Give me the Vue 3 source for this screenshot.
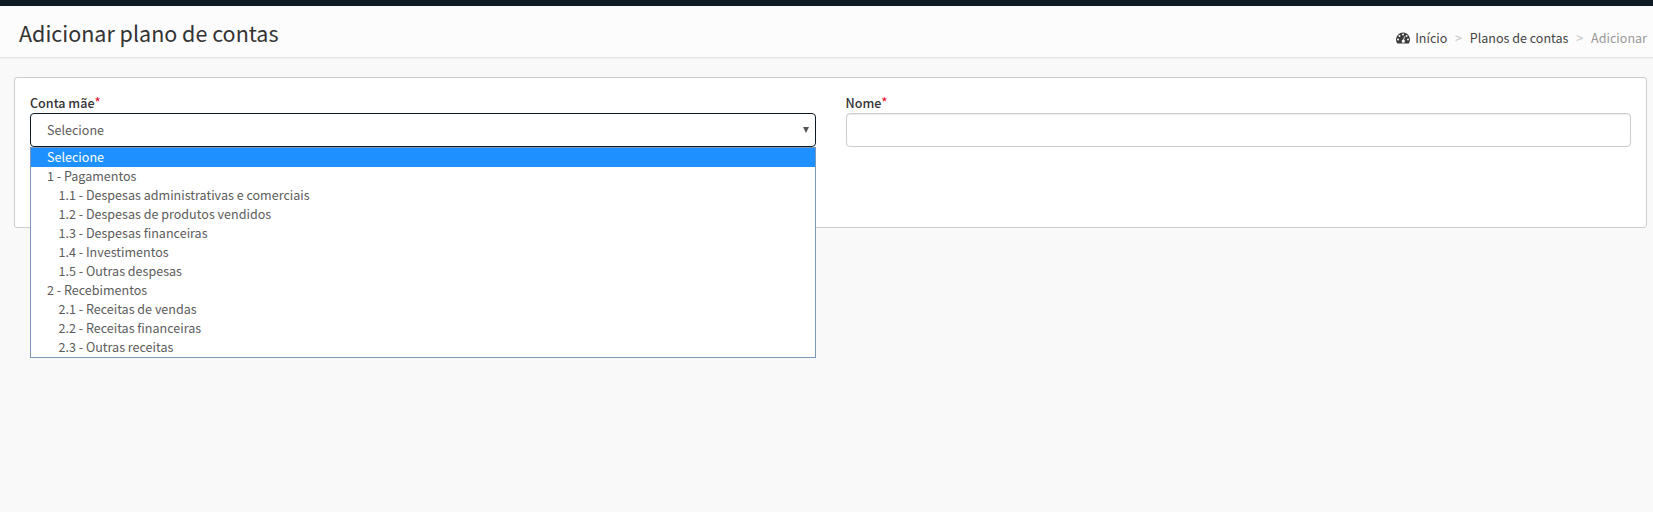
<script setup>
const options = [
  { text: 'Selecione', selected: true },
  { text: '1 - Pagamentos' },
  { text: '1.1 - Despesas administrativas e comerciais', child: true },
  { text: '1.2 - Despesas de produtos vendidos', child: true },
  { text: '1.3 - Despesas financeiras', child: true },
  { text: '1.4 - Investimentos', child: true },
  { text: '1.5 - Outras despesas', child: true },
  { text: '2 - Recebimentos' },
  { text: '2.1 - Receitas de vendas', child: true },
  { text: '2.2 - Receitas financeiras', child: true },
  { text: '2.3 - Outras receitas', child: true },
]
</script>

<template>
  <div class="page">
    <header class="header">
      <h1>Adicionar plano de contas</h1>
      <nav class="crumbs">
        <svg class="gauge" viewBox="0 0 14 12" width="14" height="12">
          <path d="M7 .6a7 7 0 0 0-7 7c0 1.3.4 2.6 1.1 3.7.1.2.3.3.5.3h10.8c.2 0 .4-.1.5-.3A7 7 0 0 0 7 .6z" fill="#3c3c3c" />
          <g fill="#fbfbfb">
            <circle cx="2" cy="7.6" r="1" />
            <circle cx="3.5" cy="4.1" r="1" />
            <circle cx="7" cy="2.6" r="1" />
            <circle cx="10.5" cy="4.1" r="1" />
            <circle cx="12" cy="7.6" r="1" />
            <path d="M8.1 4.5l.8.2-.8 3.1a1.6 1.6 0 1 1-.8-.2z" />
          </g>
        </svg>
        <a class="home">Início</a>
        <span class="sep">&gt;</span>
        <a class="plans">Planos de contas</a>
        <span class="sep">&gt;</span>
        <span class="current">Adicionar</span>
      </nav>
    </header>

    <main class="card">
      <div class="field">
        <label>Conta mãe<b>*</b></label>
        <div class="control select">
          <span>Selecione</span>
          <svg class="arrow" viewBox="0 0 6 6" width="6" height="6"><path d="M0 0h6L3 6z" fill="#555" /></svg>
        </div>
        <ul class="menu">
          <li v-for="o in options" :key="o.text" :class="{ selected: o.selected, child: o.child }">{{ o.text }}</li>
        </ul>
      </div>
      <div class="field">
        <label>Nome<b>*</b></label>
        <div class="control input"></div>
      </div>
    </main>
  </div>
</template>

<style>
body { background: #f9f9f9; }
</style>

<style scoped>
* { box-sizing: border-box; }
.page {
  height: 512px;
  overflow: hidden;
  background: #f9f9f9;
  border-top: 6px solid #0e1a25;
  font-family: "Noto Sans CJK SC", "Noto Sans", sans-serif;
  font-size: 12.55px;
  color: #333;
}
.header {
  display: flex;
  justify-content: space-between;
  height: 52px;
  padding: 0 6px 0 19px;
  background: #fcfcfc;
  border-bottom: 1px solid #e4e4e4;
  box-shadow: 0 1px 1px #f0f0f0;
}
h1 {
  margin: 0;
  font-size: 21.5px;
  font-weight: 400;
  line-height: 54px;
  white-space: nowrap;
}
.crumbs {
  display: flex;
  align-items: center;
  height: 30px;
  margin-top: 16px;
  color: #444;
  white-space: nowrap;
}
.gauge { margin: 2px 5px 0 0; }
.home { width: 32px; }
.sep { width: 22.6px; text-align: center; color: #c4c4c4; }
.current { color: #999; }
.card {
  display: flex;
  gap: 30px;
  height: 151px;
  margin: 19px 6px 0 14px;
  padding: 16px 15px;
  background: #fff;
  border: 1px solid #ccc;
  border-radius: 3px;
}
.field { position: relative; flex: 1; }
label {
  display: block;
  height: 19px;
  line-height: 18px;
  font-weight: 500;
}
label b { color: #f00020; font-weight: 400; font-size: 13.5px; line-height: 1; }
.control {
  height: 34px;
  border: 1px solid #ccc;
  border-radius: 4px;
  background: #fff;
}
.input { box-shadow: inset 0 1px 1px rgba(0, 0, 0, .075); }
.select {
  display: flex;
  align-items: center;
  justify-content: space-between;
  padding: 0 6px 0 16px;
  border-color: #0e1a25;
  color: #5c5c5c;
  line-height: 18px;
}
.menu {
  position: absolute;
  top: 53px;
  left: 0;
  right: 0;
  margin: 0;
  padding: 0;
  list-style: none;
  background: #fff;
  border: 1px solid #7b98b9;
  color: #5c5c5c;
}
.menu li { height: 19px; padding-left: 16px; line-height: 18px; white-space: nowrap; }
.menu .child { padding-left: 27.5px; }
.menu .selected { background: #1e90ff; color: #fff; }
</style>
